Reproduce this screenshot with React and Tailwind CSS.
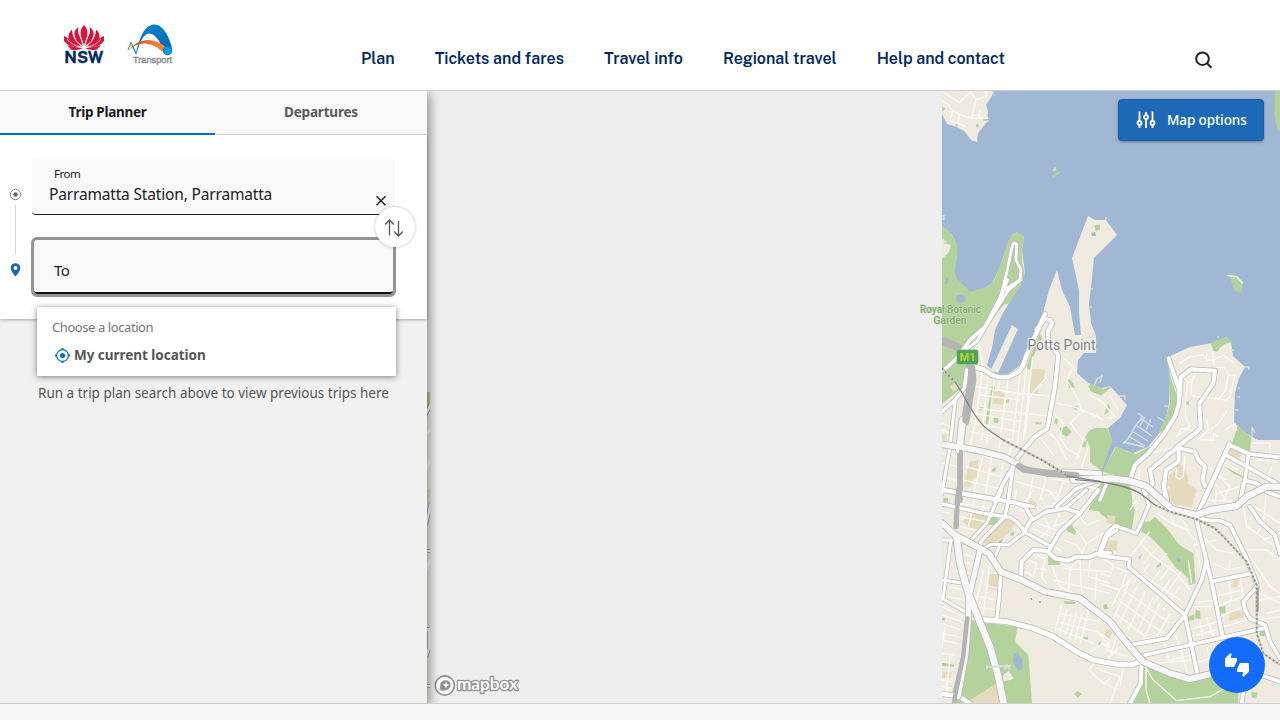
import React from "react";

const LAND = "#efebe1";
const WATER = "#a0b8d3";
const GREEN = "#b4d29c";
const SAND = "#e5dabc";

// Each map tile is drawn at three times the screen scale from its own origin.
const tiles = {
  north: "translate(920 90) scale(.33333)",
  west: "translate(920 280) scale(.33333)",
  east: "translate(1090 280) scale(.33333)",
  south: "translate(930 490) scale(.33333)",
  southEast: "translate(1100 490) scale(.33333)",
};

const parks = {
  north: [
    "M66 408L82 418L95 435L112 465V495L103 545L115 580L130 600L160 620L195 600L220 575L240 530L252 495L262 460L275 435L290 427L305 432L312 445L305 480L307 520L315 555L300 590L270 640L150 660H66Z",
    "M1067 0H1090V140L1072 115L1062 75Z", "M396 259L416 242L421 248L400 264Z", "M524 406L540 404V420L526 423Z",
    "M927 556L950 557L968 578L963 610L945 602Z", "M190 82H205L200 92H190Z", "M168 103L176 102V111H168Z", "M66 51L76 54L70 63H66Z", "M104 104L114 101L110 113Z",
  ],
  west: [
    "M66 0H115L150 35L205 20L225 0H298L275 45L235 95L190 150L150 190L140 205L150 240L150 270L130 320L66 372Z",
    "M318 265L332 225L360 160L366 175L338 235L330 270Z", "M215 318L225 320L207 435L196 430Z", "M222 412L238 412L233 430L221 428Z",
    "M441 300L450 297L466 322L448 325Z", "M418 445L440 438L455 456L440 470L426 462Z", "M347 426L366 428L364 433H347Z", "M405 418L414 414L411 433L403 430Z",
    "M460 380L474 378L472 390L463 388Z", "M216 568L228 562L226 574L218 576Z", "M484 490L500 480L498 502L486 500Z", "M504 315L540 332V342L508 325Z", "M178 383L190 380V390L178 392Z", "M256 360L268 356L266 368H256Z",
  ],
  east: [
    "M362 188L398 175L410 170L425 187L405 192L390 203L382 215L370 213Z", "M0 310L20 318L42 328L60 318L62 325L32 347L0 333Z",
    "M-15 470L0 450L20 443L52 445L66 482L35 572L10 555L0 545V500Z", "M80 497L110 515L140 521L178 500L185 512L155 540L133 554L120 597L38 575Z",
    "M232 230L240 285L260 345L262 385L220 460L205 455L228 410L240 370L238 300Z", "M432 423L458 450L484 472L480 517L425 492L443 440Z",
    "M42 405L55 370L60 385L52 398Z", "M285 365L297 364V375L285 374Z", "M404 560L458 588V594L430 580Z", "M20 625L50 590L118 604L128 665H0Z", "M418 -20L440 10L447 37L456 35L458 0Z",
  ],
  south: [
    "M505 0H545V70L475 60Z", "M355 198L390 202L389 225H354Z", "M410 112L425 104L440 115L435 134L412 124Z", "M178 90L190 78L208 80L197 105H175Z", "M120 390L262 412L255 455L295 495L306 640H70L110 535Z",
    "M400 333L438 336L432 343L405 341Z", "M240 130L252 124V136L243 138Z", "M432 612L443 603L455 612L444 623Z", "M520 350L530 344L534 357L523 358Z", "M460 442L475 440L472 451L461 450Z", "M505 458L513 453L511 468L505 467Z", "M36 518L72 524V530L36 528Z", "M40 25L54 24V35H40Z", "M207 152L220 145L214 160H203Z", "M36 384L44 383V392H36Z",
  ],
  southEast: [
    "M0 0H80L105 60L95 122L45 105L0 70Z", "M118 92L148 95L165 80L203 118L238 165L280 190L287 280L270 285L262 262L225 230L190 180L150 140L117 120Z",
    "M128 520L190 550L260 570L415 550V640H98L125 590Z", "M168 225L184 215L182 228L170 233Z", "M115 200L126 194L120 209Z", "M262 382L283 373V390L265 392Z", "M287 361L300 362L302 386L285 385Z", "M360 350L376 348L377 370H360Z", "M478 424H495V438H480Z", "M453 606L474 608L468 625L455 622Z", "M10 345L20 342L24 357H12Z", "M470 290L479 292L478 303H470Z",
  ],
};

const sand = {
  west: ["M332 268H375L368 312H355V342L328 338L330 300Z", "M222 335L238 332L256 345L250 375L217 370L220 350Z", "M150 545L175 540L172 590L158 595L155 618L130 622L140 580Z", "M66 464H80V482H66Z", "M90 320L105 307L120 322L100 335Z"],
  east: ["M240 585L255 570L265 552L282 560L295 592L292 610L318 628L310 665H235L240 620L228 615Z", "M420 502L455 520L445 540L415 530Z"],
  south: ["M97 95L125 68L180 70L165 105L140 127Z", "M155 155L222 85L258 95L240 125L180 168Z", "M288 45L303 25L322 42L300 60Z", "M180 253L205 252L200 300L173 295Z", "M200 580L220 640H105Z", "M525 430L540 420V445H527Z", "M36 545H64V563H36Z"],
  southEast: ["M190 0H290L275 50L225 45L200 25Z", "M22 75L48 78L42 104L18 98Z", "M20 150L53 152L50 182L15 178Z", "M388 365L432 362L434 382L388 392Z", "M402 265H417L412 292L397 290Z", "M20 415L40 425L25 445L14 435Z"],
};

const water = [
  "M991 91H1280V440H1258L1252 437L1242 430L1234 422L1235 393L1239 378L1245 367L1233 356L1231 342L1227 337L1212 343L1190 347L1168 357L1170 377L1169 403L1165 422L1160 432L1148 447L1133 453L1115 447L1103 472L1100 471L1112 441L1108 428L1120 418L1127 405L1118 395L1110 386L1102 388L1093 385L1087 382L1077 373L1078 360L1084 353L1096 353V336L1091 323L1089 303L1091 287L1094 258L1117 235L1106 220H1095L1088 216L1072 258L1079 290L1079 313L1081 335H1075L1070 307L1062 290L1057 270L1049 290L1043 313L1033 337L1023 363L1008 374L997 375L987 365L992 348L995 330L1003 313L1020 285L1025 273L1022 250L1024 237L1017 232L1012 235L1007 245L1000 267L992 283L981 292H967L958 283L954 272L957 255V245L952 235L942 226V114L947 124L957 127L965 132L971 140L977 142L978 133L987 122L988 111L986 105L990 99L994 92Z",
];

const minor = {
  north: ["M68 5L118 38L152 5", "M196 0L198 20L168 28L155 85L205 84", "M168 28L150 5", "M66 32L82 42L98 62L118 73L155 85", "M98 62L90 92L138 110", "M118 73L114 100", "M182 60L174 84", "M920 556L950 560L968 580"],
  west: [
    "M175 185L188 260L180 330L165 430L150 500", "M205 270L185 480", "M225 285L200 490", "M265 292L240 480L235 520", "M300 280L275 500L265 530", "M320 260L290 510", "M338 230L310 480", "M380 290L330 350L315 460",
    "M170 320L260 335L395 350", "M180 345L300 360", "M170 385L385 408", "M165 400L300 425", "M160 430L300 455", "M150 455L270 480", "M240 300L235 330L310 345", "M430 235L460 260L440 300L470 350L490 400", "M410 370L460 380L540 412", "M400 400L430 430L420 470L440 505L480 530", "M385 455L410 480L440 540", "M360 470L400 525", "M480 400L450 430L490 480L470 540", "M150 510L250 545L242 600L230 660", "M190 525L160 640", "M215 530L195 650", "M140 560L240 590", "M130 600L235 625", "M66 430L90 440M66 450L88 458M66 520L118 530M66 550L115 560M66 590L108 600", "M300 575L420 600L540 630", "M340 590L325 660M380 590L360 660M430 605L410 660", "M290 605L410 640", "M505 500L485 560",
  ],
  east: [
    "M268 250L300 230L340 225L352 240H372L400 225L430 248", "M368 215L372 255", "M350 215V242", "M378 262H405L415 285H435L420 350L410 360L305 348", "M415 285L408 330L385 358", "M315 280L305 310L303 345M275 290L300 310", "M292 310L285 400L298 440L258 472", "M260 472L275 445L310 450", "M350 415L355 450L375 440L400 410L410 392", "M355 450L325 478L370 480V460L385 470", "M405 450L435 432L440 450", "M0 345L35 365L75 410L55 415", "M0 400L40 420", "M60 350L85 390", "M180 520L260 500", "M285 530L280 590L268 598L258 590L260 565", "M485 490L540 488M540 488V510", "M530 610L545 560M375 580L410 600M390 540L445 570M370 600L400 650M380 640L450 620M500 540L560 545", "M150 565L145 600M355 560L420 620L400 660",
  ],
  south: [
    "M36 65L60 70M36 100L60 105M36 120L60 126", "M100 0L85 90M140 0L115 110M170 0L155 70", "M90 40L180 55M90 80L170 95M90 110L140 120", "M260 0L250 50M310 0L270 60L320 75", "M330 10L345 50L400 55", "M355 0L395 45M460 20L400 60M430 0L360 50", "M320 100L380 120M305 115L375 145M340 75L360 115L330 145", "M390 70L370 110L420 90M440 75L470 105L510 90", "M460 70L430 110L470 160L450 200M470 160L520 130", "M400 150L440 165L460 195M375 170L395 185", "M285 205L320 220L310 260L285 245M300 190L345 205L335 260L350 280M320 235L350 240", "M365 225L390 290L430 310M380 205L420 235L450 210M420 235L415 310M450 210L455 310M480 210L475 260L540 280M500 250L495 330M370 270L540 310M400 235L540 245",
    "M160 240L140 330M180 220L160 370M160 285L205 295M150 320L200 330M140 350L200 360M90 190L130 200M80 215L120 220M75 240L118 250M60 290L100 300M55 320L105 330M60 190L55 260", "M36 350L100 380M36 375L95 395M36 400L90 420M36 430L85 440M36 450L80 460M36 490L75 495M36 570L65 575M45 410L36 470M60 500L50 600M36 590L65 595",
    "M395 345L375 425M410 360L390 430M425 370L405 435M440 365L420 445M455 370L435 455M470 380L450 460M385 370L510 395M380 395L500 425M380 415L490 460M500 420L540 470M470 490L520 460L540 475M490 520L478 540L520 583L540 565", "M500 380L540 410M480 350L470 380", 
  ],
  southEast: [
    "M150 0L170 40M110 30L90 60M170 70L215 100L260 120L285 150M210 75L225 105L270 120M240 80L260 110", "M150 125L120 160L160 200L230 250L270 300M130 150L90 200M170 175L130 220M200 190L160 235M220 220L180 270M245 245L200 310M265 210L275 280M290 180L305 250",
    "M90 230L240 330M110 250L70 290M150 220L100 280M180 240L130 310M210 270L160 340M240 290L190 360M0 200L40 225L30 260L0 250M40 230L80 245L65 290L35 350M0 280L60 300M90 270L40 390M110 290L60 400M135 305L85 420M160 320L110 430M180 340L130 450M70 300L210 400M55 330L190 430M45 370L150 450M20 390L80 440M210 370L170 440", "M0 430L30 450L20 480L80 500M50 440L30 500M60 470L20 510M0 380L50 430M0 540L60 560L30 640M0 570L50 600M70 530L60 590",
    "M290 120L350 180L400 190L430 160M350 150L280 165M390 210L385 240L340 220M385 240L430 230M385 270L395 330L370 340M340 320L430 300M350 350L430 320M360 380L430 350M370 410L480 380M420 260L430 320M500 370L540 360M470 390L540 380M260 340L350 330M270 350L360 350M265 420L370 390M270 440L350 420M320 380L340 440M300 395L310 450M220 420L240 470M190 450L210 520M240 470L265 560M210 510L280 495M170 520L275 510M290 520L340 500M320 470L335 530",
    "M320 30L400 35M350 0L345 40M380 0L375 35M300 60L280 90M430 45L440 110L500 150M470 60L450 90M500 0L490 100L470 130M540 130L490 150L540 170M440 180L500 180L540 210M450 200L510 290L540 310M480 310L540 340M480 330L540 320M460 300L490 250M360 60L370 90M420 20L540 100", "M135 530L160 570L230 632L330 620L400 580L440 560M138 540V600L150 640", 
  ],
};

const roads = [
  ["north", "M242 620L262 540L272 490L278 464Q284 455 290 464L288 510L303 540L300 570L245 605", 8],
  ["west", "M40 275L75 268L110 235L150 180L195 140L240 55L262 0", 10],
  ["west", "M300 0L265 30L215 110L170 185L130 215", 9],
  ["west", "M170 262L190 268L215 285L240 292H265L295 275L310 255L318 230L340 180L375 103", 13],
  ["west", "M350 150L372 118L390 120L397 130L383 155L385 190L415 225L405 320L382 445L345 470L310 510L280 550", 12],
  ["west", "M66 395L105 360L133 325L140 270", 10],
  ["west", "M106 360L90 500L66 640", 9],
  ["west", "M66 628L220 655L340 680", 10],
  ["west", "M285 550L250 610L225 665", 11],
  ["west", "M280 555L262 680", 10],
  ["west", "M540 600L470 625L410 680", 10],
  ["south", "M36 0L140 20L260 38L285 50L306 85L280 130", 11],
  ["south", "M36 42L160 70L240 82L260 95L290 130L360 168", 10],
  ["south", "M215 0L170 100L118 155", 9],
  ["south", "M240 0L225 80L152 155V175", 10],
  ["south", "M306 90L350 65L405 55L450 70", 11],
  ["south", "M405 55L470 0", 9],
  ["south", "M505 0L450 70L390 125L355 185", 11],
  ["south", "M273 262L275 215L310 180L350 182L375 205L415 212L440 200L475 202L510 188H540", 12],
  ["south", "M510 190L522 165L530 140L560 120", 10],
  ["south", "M155 178L185 163L235 165L280 130", 9],
  ["south", "M208 170L190 210", 8],
  ["south", "M36 150H75M62 155L40 320M36 270L90 278M36 325L110 368", 9],
  ["south", "M212 250L208 320L200 390", 10],
  ["south", "M36 612L85 618L120 640", 13],
  ["south", "M145 388L230 395L310 415L370 440L440 485L490 510L555 522L605 525L640 510", 15],
  ["east", "M236 236L268 330L266 375L255 410L220 465L175 520L135 555L120 600", 12],
  ["east", "M270 345L272 292L302 268L375 272L370 310L328 370L332 445L315 460L275 490L262 500", 12],
  ["east", "M266 500L240 520L180 570L188 610L170 640", 12],
  ["east", "M266 500V545L228 570L222 620L228 665", 12],
  ["east", "M270 505L315 515L325 540L345 560L338 600L345 618", 12],
  ["east", "M418 493L340 665", 13],
  ["east", "M418 495L478 522L570 532", 11],
  ["east", "M408 525L560 610", 11],
  ["east", "M475 525L465 600L450 665", 10],
  ["east", "M467 602L500 610L530 635L570 650", 11],
  ["southEast", "M22 -25L0 30M0 180L20 130L45 107L110 130L147 45L130 0", 10],
  ["southEast", "M190 -20L202 30M325 0L295 65", 11],
  ["southEast", "M430 -20L420 45M450 50L480 95L525 135L540 190", 11],
  ["southEast", "M288 85L335 275L368 440", 11],
  ["southEast", "M320 210L305 270L255 375L200 445L100 463", 11],
  ["southEast", "M342 273L455 250", 11],
  ["southEast", "M0 197L88 208L85 230L255 375L292 550", 11],
  ["southEast", "M300 85L330 92H360L390 105L405 135L435 195L470 280L470 290L430 335L435 360L450 385L495 405L510 455L540 505", 11],
  ["southEast", "M135 495L270 465L490 415", 11],
  ["southEast", "M125 515L122 580L90 640", 12],
  ["southEast", "M425 640L440 540L540 575", 11],
];

const highways = [
  ["west", "M66 493L140 505L190 515L250 530L290 550", 17],
  ["west", "M128 420L118 510", 20],
  ["west", "M430 575L540 580", 14],
  ["east", "M-50 600L60 595L120 603L168 618L215 660L250 690L320 705L360 690L440 678L470 650L530 620L570 620", 19],
  ["south", "M36 100L75 135L150 175L178 192L212 245L275 270L345 305L450 325L540 395L595 465L640 515L720 550L780 567L850 550", 18],
  ["south", "M80 145L90 220L115 310L145 385L180 470L205 560L222 645", 20],
  ["south", "M150 180L135 245L115 330L115 400L108 490L85 620", 15],
];

const grey = [
  ["west", "M66 182L110 200L150 245L155 300L135 425", 24],
  ["west", "M120 495V660", 17],
  ["west", "M290 552L310 568L380 580L480 587", 20],
  ["south", "M84 0L78 110", 16],
  ["south", "M112 385L100 500L72 620", 14],
];

const tunnels = [
  ["west", "M155 265L158 300L138 420", 22],
  ["west", "M122 515L120 660", 12],
  ["west", "M295 558L330 572L470 585", 17],
  ["south", "M112 385L100 500L72 635", 13],
  ["south", "M84 0L80 105", 12],
];

function Layer({ data, fill }) {
  return Object.entries(data).map(([tile, paths]) => (
    <g key={tile} transform={tiles[tile]} fill={fill}>
      {paths.map((d) => <path key={d} d={d} />)}
    </g>
  ));
}

function Lines({ list, color, extra = 0 }) {
  return (
    <g fill="none" stroke={color} strokeLinejoin="round" strokeLinecap="round">
      {list.map(([tile, d, w]) => (
        <path key={d} d={d} strokeWidth={w + extra} transform={tiles[tile]} />
      ))}
    </g>
  );
}

function MapCanvas() {
  return (
    <svg className="block h-[612px] w-[853px]" viewBox="427 91 853 612" aria-hidden="true">
      <defs>
        <clipPath id="mapTile"><path d="M942 91H1280V703H942Z" /></clipPath>
        <clipPath id="edgeTile"><path d="M427 392H430V703H427Z" /></clipPath>
      </defs>
      <path d="M427 91H1280V703H427Z" fill="#eeeeee" />
      <g clipPath="url(#edgeTile)">
        <path d="M427 392H430V703H427Z" fill={LAND} />
        <path d="M427 392H430V404L427 418Z" fill="#a5cf8a" />
        <path d="M427 489H430V497L427 504Z" fill={SAND} />
        <g fill="none" stroke="#999" strokeWidth="4"><path d="M426 414L431 404M426 525L431 502M426 551H431M426 630L429 629V648L426 657M426 686H431" /></g>
        <g fill="none" stroke="#fff" strokeWidth="2.5"><path d="M426 414L431 404M426 525L431 502M426 551H431M426 630L429 629V648L426 657M426 686H431M426 434L430 430M426 470L430 460M426 570L430 560" /></g>
      </g>
      <g clipPath="url(#mapTile)">
        <path d="M942 91H1280V703H942Z" fill={LAND} />
        <g fill={WATER}>{water.map((d) => <path key={d} d={d} />)}</g>
        <Layer data={parks} fill={GREEN} />
        <Layer data={sand} fill={SAND} />
        <g fill={WATER}>
          <path d="M956 296L961 294L966 297L965 301L961 303L957 301Z" />
          <path d="M1014 653Q1018 652 1022 659L1023 668L1019 671L1013 662Z" />
          <path d="M1177 557L1181 560L1179 562L1176 559ZM1091 233L1095 232L1096 236H1092ZM946 279L948 277V283L945 285Z" />
        </g>
        <g fill={LAND}>
          <path d="M1012 325L1018 329L998 373L991 370Z" />
          <path d="M942 238L947 242L943 243L951 245L949 252L942 259ZM984 340L991 332L984 362L979 366Z" />
          <path d="M1004 674L1009 671L1014 679L1001 682Z" />
        </g>
        <g fill="none" stroke="#dddcda" strokeWidth="1.4">
          <path d="M994 96L995 95M986 121H989M1053 171L1055 168L1056 171M942 216H944V219H942M1106 220V217M1091 289H1093M1092 307H1090M1096 336L1092 334M1218 338V336M1231 350H1234M1244 367H1249V370M1238 388H1240M1237 397H1240M1235 410H1238M1252 437V427L1255 433M1094 386L1097 379L1102 376L1100 383M1118 396H1125V400" />
          <path d="M1138 413L1143 417L1136 425L1128 439M1136 425L1152 436M1132 431L1148 441M1128 436L1145 446M1124 442L1144 447M1130 436L1123 444M1140 418L1153 427M1145 417L1140 426M1151 419L1146 430M1157 417L1164 421M1126 443L1141 446M1164 406H1168" />
        </g>
        {Object.entries(minor).map(([tile, paths]) => (
          <g key={tile} transform={tiles[tile]} fill="none" stroke="#fbfaf7" strokeWidth="4" strokeLinejoin="round">
            {paths.map((d) => <path key={d} d={d} />)}
          </g>
        ))}
        <Lines list={grey} color="#b5b5b5" />
        <Lines list={roads} color="#bebebd" extra={5} />
        <Lines list={roads} color="#ffffff" />
        <Lines list={highways} color="#b9b9b9" extra={5} />
        <Lines list={highways} color="#f7f7f7" />
        <Lines list={tunnels} color="#b5b5b5" />
        <g transform={tiles.west} fill="none">
          <path d="M66 265L105 305M250 480L370 542L440 585" stroke="#c9c6c0" strokeWidth="7" />
          <path d="M66 265L105 305M250 480L370 542L440 585" stroke="#8a8a88" strokeWidth="6" strokeDasharray="5 9" />
          <path d="M105 305L130 345Q175 430 205 450L250 480M440 588L540 604" stroke="#858585" strokeWidth="4" />
        </g>
        <g transform={tiles.southEast} fill="none">
          <path d="M-75 -31L0 -25L50 -15Q95 -5 120 10L165 45" stroke="#808080" strokeWidth="4" />
          <path d="M165 45L210 65L290 88L345 115L380 150L440 215L470 285V430L490 490L540 525" stroke="#d2cfc8" strokeWidth="7" />
          <path d="M165 45L210 65L290 88L345 115L380 150L440 215L470 285V430L490 490L540 525" stroke="#8f8f8d" strokeWidth="5" strokeDasharray="6 7" />
          <path d="M473 295V365" stroke="#999" strokeWidth="6" />
        </g>
        <path d="M986 667L1009 666M987 665V669M1004 669L1011 665M1006 664L1010 670" stroke="#ddd" strokeWidth="2" />
        <path d="M1031 598L1032 600M1039 602H1041" stroke="#777" />
      </g>
      <g fontFamily="Roboto, sans-serif" textAnchor="middle" strokeLinejoin="round" paintOrder="stroke">
        <g fontSize="10" fontWeight="500" fill="#80aa70" stroke="#d3e3c8" strokeWidth="1">
          <text x="950.5" y="313" textLength="61" lengthAdjust="spacingAndGlyphs">Royal Botanic</text>
          <text x="950" y="324" textLength="33" lengthAdjust="spacingAndGlyphs">Garden</text>
        </g>
        <text x="1061.5" y="350" fontSize="14.5" textLength="68" lengthAdjust="spacingAndGlyphs" fill="#808080" stroke="#f8f7f5" strokeWidth="2">Potts Point</text>
        <rect x="957" y="350" width="21" height="14" rx="2" fill="#4da357" stroke="#83bf80" />
        <text x="967.5" y="361" fontSize="11" fontWeight="700" fill="#b4d22f">M1</text>
      </g>
      <g fill="none" stroke="#8e8e8e">
        <circle cx="444.8" cy="685.5" r="9.6" fill="#fff" strokeWidth="1.6" />
        <path d="M440.6 690.2Q439 681 445 680.4C450 680 452 685 449 688.5Q446 691 440.6 690.2Z" fill="#8e8e8e" strokeWidth=".5" />
        <path d="M446 681.5L447 684L449.6 685L447 686L446 688.5L445 686L442.4 685L445 684Z" fill="#fff" stroke="none" />
        <text x="457" y="690" fontFamily="Lato, sans-serif" fontSize="16.5" fontWeight="700" textLength="61" lengthAdjust="spacingAndGlyphs" fill="#fff" strokeWidth="2.4" paintOrder="stroke" strokeLinejoin="round">mapbox</text>
      </g>
    </svg>
  );
}

function NswLogo() {
  return (
    <svg className="h-[42px] w-[42px] overflow-visible" viewBox="63 24 42 42" role="img" aria-label="NSW">
      <g fill="#d7153a">
        <path d="M84 25Q90 31 86.5 38L84 46L81.5 38Q78 31 84 25Z" />
        <path d="M78.5 27Q77 33 80.5 38L83 46Q75 41 74.3 34Q74.5 29.500 78.500 27ZM89.500 27Q91 33 87.500 38L85 46Q93 41 93.700 34Q93.500 29.500 89.500 27Z" />
        <path d="M72 29.500Q72 37 78 42L82 47Q71 44 68.500 38Q68 32.500 72 29.500ZM96 29.500Q96 37 90 42L86 47Q97 44 99.500 38Q100 32.500 96 29.500Z" />
        <path d="M64 36Q68 37 72 41.500L80 47.500Q68 47 64 41ZM104 36Q100 37 96 41.500L88 47.500Q100 47 104 41Z" />
        <path d="M67 45Q75 48 83 48Q78 51 71 49.500ZM101 45Q93 48 85 48Q90 51 97 49.500Z" />
      </g>
      <g fill="none" stroke="#fff" strokeWidth=".7"><path d="M84 47L80.500 37Q79 32 81 28M84 47L87.500 37Q89 32 87 28M83 47Q74 42 73 33M85 47Q94 42 95 33M83 48Q72 46 67 39M85 48Q96 46 101 39" /></g>
      <text x="64.300" y="63.300" textLength="39" lengthAdjust="spacingAndGlyphs" fontFamily="'Public Sans', Inter, sans-serif" fontSize="16" fontWeight="700" fill="#002664" stroke="#002664" strokeWidth=".3">NSW</text>
    </svg>
  );
}

function TransportLogo() {
  return (
    <svg className="h-[42px] w-[47px] overflow-visible" viewBox="127 24 47 42" role="img" aria-label="Transport">
      <defs>
        <linearGradient id="arch" x1="0" y1="0" x2="1" y2="1"><stop stopColor="#0c8ad3" /><stop offset="1" stopColor="#0062b5" /></linearGradient>
        <linearGradient id="sweep"><stop stopColor="#d8422c" /><stop offset="1" stopColor="#f7952c" /></linearGradient>
      </defs>
      <path d="M136 54Q141 26.500 153 24.500Q165 24 171.500 46L172 51L163 51Q158 34 149 33.500Q142 34 136 54Z" fill="url(#arch)" />
      <path d="M129 50.500Q135 41 147 40Q159 40 166 48L162 51.500Q155 44.500 146 43.500Q135 43 129 50.500Z" fill="url(#sweep)" />
      <path d="M128 50L131 42.500L136 53M131 42.500L134 49" fill="none" stroke="#4aa546" strokeWidth="1.100" />
      <path d="M132.500 46L136 54L139 44" fill="none" stroke="#1387c9" strokeWidth=".9" />
      <circle cx="167.500" cy="50.500" r="4.300" fill="#0799e2" stroke="#0877c5" />
      <text x="133" y="63" textLength="39" lengthAdjust="spacingAndGlyphs" fontFamily="Liberation Sans, sans-serif" fontSize="9.200" fill="#808285" stroke="#808285" strokeWidth=".3">Transport</text>
    </svg>
  );
}

const SearchIcon = () => (
  <svg className="size-5" viewBox="0 0 20 20" fill="none" stroke="#222" strokeWidth="2"><circle cx="8.500" cy="8.700" r="6.300" /><path d="M13 13.200L17.500 17.700" /></svg>
);

const nav = ["Plan", "Tickets and fares", "Travel info", "Regional travel", "Help and contact"];

function Header() {
  return (
    <header className="flex h-[91px] shrink-0 border-b border-[#cbcfd3] bg-white">
      <div className="flex w-[361px] gap-[22px] pl-[63px] pt-6"><NswLogo /><TransportLogo /></div>
      <nav className="flex gap-10 pt-[47px] font-['Public_Sans','Inter',sans-serif] text-[16px] leading-6 font-semibold whitespace-nowrap text-[#002664]">
        {nav.map((label) => <a key={label}>{label}</a>)}
      </nav>
      <button className="mt-[50px] mr-[66px] ml-auto size-5"><SearchIcon /></button>
    </header>
  );
}

function Sidebar() {
  return (
    <aside className="relative z-10 h-[612px] w-[427px] shrink-0 bg-[#f1f1f1] font-['Noto_Sans','Open_Sans',sans-serif] shadow-[3px_3px_10px_rgba(0,0,0,0.4)]">
      <div className="flex h-11 border-b border-[#dadada] bg-[#f9f9f9] text-[13.5px] leading-[43px] font-bold">
        <div className="h-11 w-[215px] border-b-2 border-[#0a71b9] text-center text-[#1a1a1a]"><span className="tracking-[-0.3px]">Trip Planner</span></div>
        <div className="w-[212px] text-center text-[#5a5a5a]"><span className="tracking-[-0.2px]">Departures</span></div>
      </div>
      <div className="flex h-[184px] bg-white pt-6 shadow-[0_1px_3px_rgba(0,0,0,0.3)]">
        <svg className="h-[160px] w-8 shrink-0" viewBox="0 159 32 160" fill="none">
          <circle cx="15.500" cy="194.500" r="5.200" stroke="#888" /><circle cx="15.500" cy="194.500" r="2.200" fill="#666" />
          <path d="M15.500 205V255" stroke="#d4d4d4" />
          <path d="M15.500 276.500Q10.700 271 10.700 268A4.800 4.800 0 0 1 20.300 268Q20.300 271 15.500 276.500Z" fill="#1d68b4" /><circle cx="15.500" cy="268" r="1.900" fill="#fff" />
        </svg>
        <div className="w-[363px]">
          <div className="flex h-14 justify-between rounded-[4px] border-b border-[#222] bg-[#f9f9f9]">
            <div className="pl-[17px] text-[#202124]">
              <div className="mt-2 pl-[5px] text-[11.500px] leading-[14px] tracking-[-0.5px]">From</div>
              <div className="mt-[3px] text-[15.500px] leading-5 tracking-[-0.17px] whitespace-nowrap">Parramatta Station, Parramatta</div>
            </div>
            <svg className="mt-[36px] mr-[8px] size-3" viewBox="0 0 12 12" stroke="#222" strokeWidth="1.500"><path d="M1.500 1.200L10.500 10.200M10.500 1.200L1.500 10.200" /></svg>
          </div>
          <div className="mx-[2px] mt-[25px] flex h-[54px] items-center rounded-[3px] border-b-2 border-[#111] bg-[#f9f9f9] pl-5 pt-2 text-[15px] tracking-[-0.5px] text-[#202124] outline-[3px] outline-[#949494]">To</div>
        </div>
      </div>
      <p className="mt-[64px] pl-[38px] text-[13.500px] leading-5 whitespace-nowrap text-[#555]">Run a trip plan search above to view previous trips here</p>
      <button className="absolute top-[116px] left-[375px] grid size-10 place-items-center rounded-full bg-white shadow-[0_0_3px_rgba(0,0,0,0.3)]">
        <svg className="mt-0.5 mr-0.5 size-5" viewBox="0 0 20 20" fill="none" stroke="#555" strokeWidth="1.300"><path d="M5.500 17.500V2M1.200 6.500L5.500 2L9.800 6.500M14.500 3V18M10.200 13.500L14.500 18L18.800 13.500" /></svg>
      </button>
      <div className="absolute top-[216px] left-[37px] h-[69px] w-[359px] bg-white pt-[10px] pl-[15px] shadow-[0_1px_6px_rgba(0,0,0,0.5)]">
        <div className="text-[13px] leading-5 tracking-[-0.42px] text-[#757575]">Choose a location</div>
        <div className="mt-2 flex items-center pl-[3px] text-[13.500px] leading-5 font-bold tracking-[-0.03px] text-[#555]">
          <svg className="mr-1 size-[15px]" viewBox="0 0 15 15" fill="none" stroke="#0872bc" strokeWidth="1.200"><circle cx="7.500" cy="7.500" r="5.900" /><circle cx="7.500" cy="7.500" r="2.600" fill="#0872bc" stroke="none" /><path d="M7.500 0V2M7.500 13V15M0 7.500H2M13 7.500H15" strokeWidth="2" /></svg>
          My current location
        </div>
      </div>
    </aside>
  );
}

export default function App() {
  return (
    <div className="flex h-screen flex-col overflow-hidden bg-[#f7f7f7]">
      <Header />
      <main className="relative flex h-[612px] shrink-0 overflow-hidden">
        <Sidebar />
        <MapCanvas />
        <button className="absolute top-2 left-[1118px] flex h-[42px] w-[146px] items-center rounded-[4px] border border-[#1760ac] bg-[#1e69b5] pl-[17px] font-['Noto_Sans','Open_Sans',sans-serif] text-[13.500px] leading-5 font-medium tracking-[-0.1px] whitespace-nowrap text-white shadow-[0_1px_3px_rgba(0,0,0,0.35)]">
          <svg className="mr-[11px] h-[18px] w-[20px]" viewBox="0 0 20 18" fill="none" stroke="#fff" strokeWidth="1.800"><path d="M3.500 .5V10M3.500 14V17M10 1V4M10 8V17M16.500 .5V10M16.500 14V17" /><circle cx="3.500" cy="12" r="2" /><circle cx="10" cy="6" r="2" /><circle cx="16.500" cy="12" r="2" /></svg>
          <span className="-mt-px">Map options</span>
        </button>
        <button className="absolute top-[546px] left-[1209px] grid size-14 place-items-center rounded-full bg-[#146cfd]">
          <svg className="size-6" viewBox="0 0 24 24" fill="#fff"><path d="M12 6c0-.55-.45-1-1-1H5.820l.66-3.180.02-.23c0-.31-.13-.59-.33-.8L5.380 0 .44 4.940C.17 5.210 0 5.590 0 6v6.500c0 .83.67 1.500 1.500 1.500h6.750c.62 0 1.150-.38 1.380-.91l2.260-5.290c.07-.17.11-.36.11-.55V6zm10.500 4h-6.750c-.62 0-1.150.38-1.380.91l-2.260 5.290c-.07.17-.11.36-.11.55V18c0 .55.45 1 1 1h5.180l-.66 3.180-.02.24c0 .31.13.59.33.8l.79.78 4.940-4.940c.27-.27.44-.65.44-1.060v-6.500c0-.83-.67-1.500-1.500-1.500z" /></svg>
        </button>
      </main>
      <footer className="h-[17px] shrink-0 border-t border-[#cecece] bg-[#f7f7f7]" />
    </div>
  );
}
